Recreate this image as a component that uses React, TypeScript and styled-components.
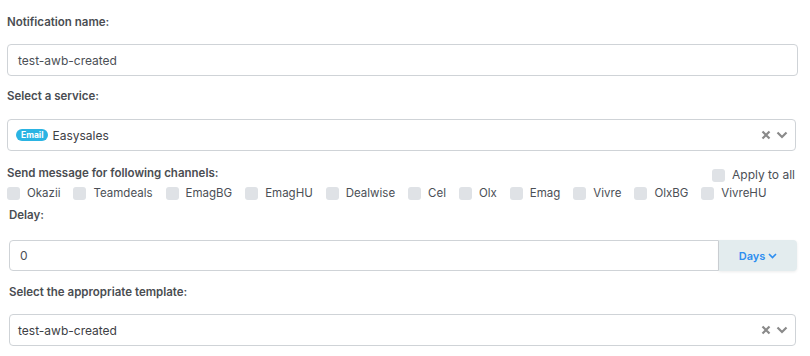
import styled, { createGlobalStyle } from "styled-components";

const GlobalStyle = createGlobalStyle`
  body {
    margin: 0;
    background: #ffffff;
    font-family: Inter, "Open Sans", sans-serif;
    color: #4b4f56;
  }
`;

const channels = [
  "Okazii",
  "Teamdeals",
  "EmagBG",
  "EmagHU",
  "Dealwise",
  "Cel",
  "Olx",
  "Emag",
  "Vivre",
  "OlxBG",
  "VivreHU",
];

export default function App() {
  return (
    <>
      <GlobalStyle />
      <Form>
        <Label $top={13}>Notification name:</Label>
        <TextBox $top={13}>test-awb-created</TextBox>

        <Label $top={11}>Select a service:</Label>
        <SelectBox $top={14}>
          <SelectValue>
            <Badge>Email</Badge>
            <span>Easysales</span>
          </SelectValue>
          <SelectIcons />
        </SelectBox>

        <ChannelsHead>
          <Label $top={0}>Send message for following channels:</Label>
          <ApplyAll>
            <Check />
            <span>Apply to all</span>
          </ApplyAll>
        </ChannelsHead>
        <ChannelRow>
          {channels.map((c) => (
            <Channel key={c}>
              <Check />
              <span>{c}</span>
            </Channel>
          ))}
        </ChannelRow>

        <Indented>
          <Label $top={4}>Delay:</Label>
          <InputGroup>
            <GroupInput>0</GroupInput>
            <Addon>
              Days
              <svg width="9" height="6" viewBox="0 0 9 6">
                <path d="M1 1l3.5 3.5L8 1" stroke="#2d8ef0" strokeWidth="1.6" fill="none" />
              </svg>
            </Addon>
          </InputGroup>

          <Label $top={12}>Select the appropriate template:</Label>
          <SelectBox $top={13}>
            <SelectValue>
              <span>test-awb-created</span>
            </SelectValue>
            <SelectIcons />
          </SelectBox>
        </Indented>
      </Form>
    </>
  );
}

function SelectIcons() {
  return (
    <Icons>
      <svg width="10" height="10" viewBox="0 0 10 10">
        <path d="M1.5 1.5l7 7M8.5 1.5l-7 7" stroke="#8a8a8a" strokeWidth="2.2" />
      </svg>
      <svg width="12" height="8" viewBox="0 0 12 8">
        <path d="M1.5 1.5L6 6l4.5-4.5" stroke="#8a8a8a" strokeWidth="2.2" fill="none" />
      </svg>
    </Icons>
  );
}

const Form = styled.div`
  display: flex;
  flex-direction: column;
  padding: 0 12px 0 7px;
  width: 810px;
  box-sizing: border-box;
`;

const Label = styled.div<{ $top: number }>`
  margin-top: ${(p) => p.$top}px;
  font-size: 11.5px;
  line-height: 18px;
  font-weight: 600;
  color: #4a4d52;
`;

const TextBox = styled.div<{ $top: number }>`
  margin-top: ${(p) => p.$top}px;
  height: 32px;
  box-sizing: border-box;
  border: 1px solid #cfd3d7;
  border-radius: 4px;
  padding: 0 10px;
  display: flex;
  align-items: center;
  font-size: 12px;
  color: #4b4f56;
`;

const SelectBox = styled(TextBox)`
  justify-content: space-between;
  padding: 0 7px 0 8px;
  margin-right: 2px;
`;

const SelectValue = styled.div`
  display: flex;
  align-items: center;
  gap: 4px;
  font-size: 12px;
  color: #3d4045;
`;

const Badge = styled.span`
  background: #2bb4e3;
  color: #ffffff;
  font-size: 8.5px;
  font-weight: 700;
  border-radius: 7px;
  padding: 0 5px;
  height: 12px;
  line-height: 12px;
`;

const Icons = styled.div`
  display: flex;
  align-items: center;
  gap: 5px;
`;

const ChannelsHead = styled.div`
  margin-top: 13px;
  display: flex;
  justify-content: space-between;
  align-items: center;
`;

const ApplyAll = styled.label`
  display: flex;
  align-items: flex-start;
  gap: 7px;
  font-size: 12px;
  color: #4b4f56;
  line-height: 12px;
  padding-top: 4px;
  margin-right: 3px;
`;

const Check = styled.span`
  display: inline-block;
  width: 13px;
  height: 13px;
  border-radius: 3px;
  background: #dfe2e6;
  flex-shrink: 0;
`;

const ChannelRow = styled.div`
  margin-top: 2px;
  display: flex;
  align-items: center;
  height: 18px;
  gap: 13px;
`;

const Channel = styled.label`
  display: flex;
  align-items: center;
  gap: 7px;
  font-size: 11.5px;
  color: #4b4f56;
`;

const Indented = styled.div`
  display: flex;
  flex-direction: column;
  padding-left: 2px;
`;

const InputGroup = styled.div`
  margin-top: 16px;
  display: flex;
  height: 31px;
  margin-right: 1px;
`;

const GroupInput = styled.div`
  flex: 1;
  box-sizing: border-box;
  border: 1px solid #cfd3d7;
  border-radius: 4px 0 0 4px;
  padding: 0 10px;
  display: flex;
  align-items: center;
  font-size: 12px;
  color: #4b4f56;
`;

const Addon = styled.div`
  width: 78px;
  background: #e3ecee;
  border-radius: 0 4px 4px 0;
  box-shadow: 0 1px 3px rgba(0, 0, 0, 0.08);
  display: flex;
  align-items: center;
  justify-content: center;
  gap: 3px;
  font-size: 11px;
  font-weight: 600;
  color: #2d8ef0;
`;
